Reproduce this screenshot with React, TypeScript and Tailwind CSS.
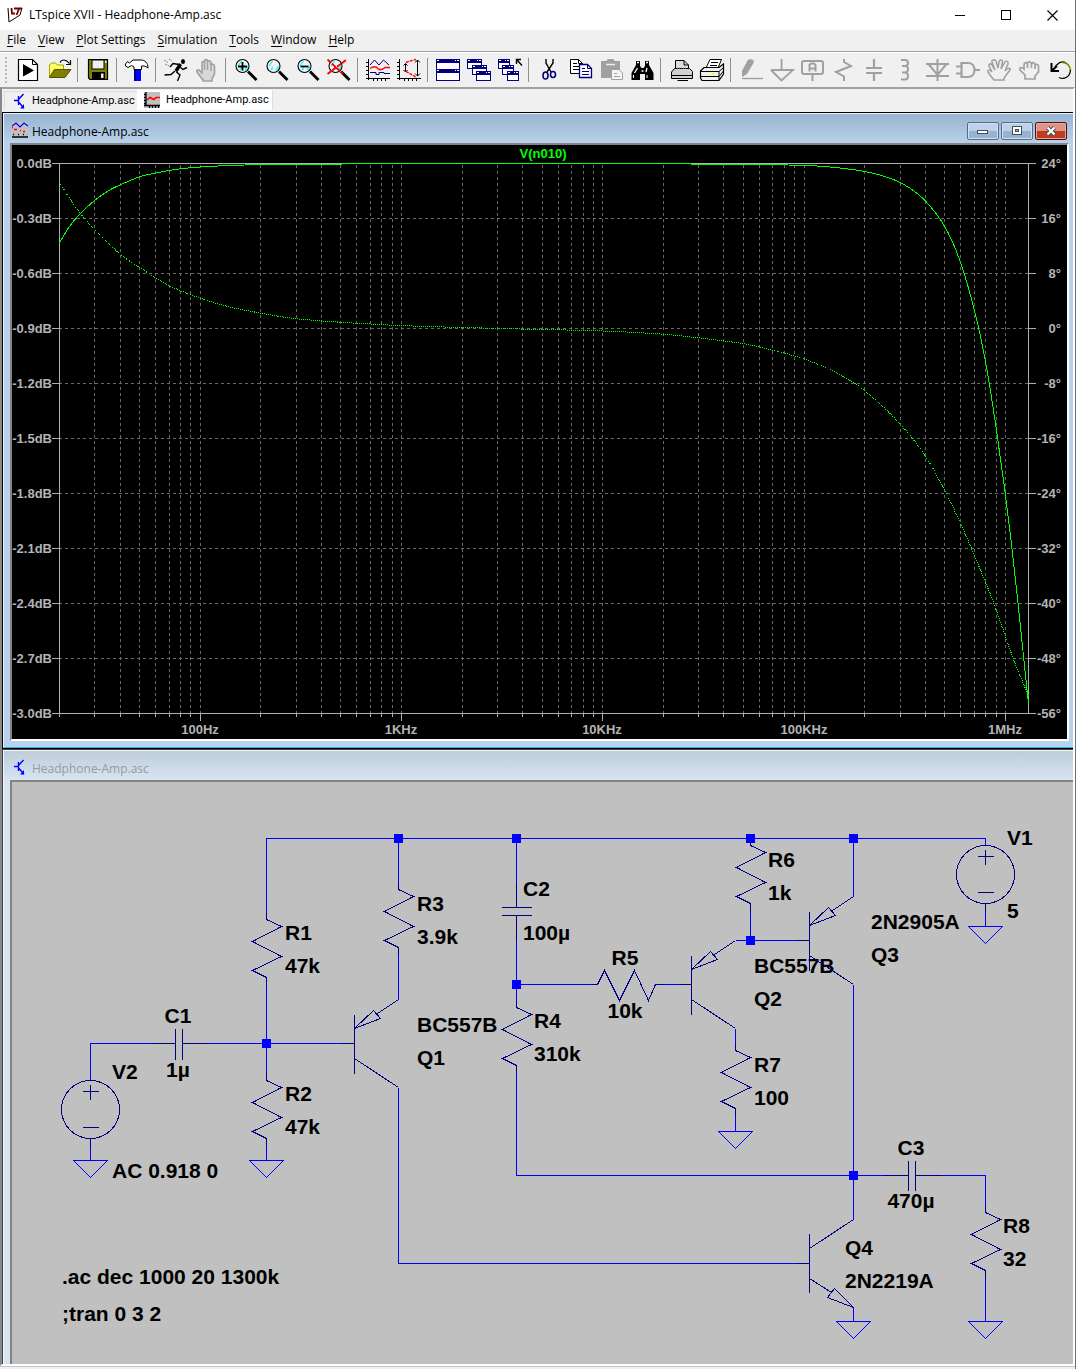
import type { ReactNode } from 'react';

const menus = ['File', 'View', 'Plot Settings', 'Simulation', 'Tools', 'Window', 'Help'];

type Tool = { label: string; art: ReactNode; disabled?: boolean };

const GREY = '#a0a0a0';
const NAVY = '#000080';

const lens = (
  <>
    <path d="M15 13.500L23.500 22" stroke="#000" strokeWidth="2.800" />
    <circle cx="9.500" cy="8" r="6.500" fill="#f4f4f4" stroke="#000" strokeWidth="1.100" />
  </>
);

const shine = <path d="M5 8L8.500 3M7 12L9 9.500M12 12L15 8" stroke="#0ff" strokeWidth="1.300" />;

const miniWindow = (x: number, y: number, w = 14, h = 9) => (
  <g key={`${x}-${y}`}>
    <rect x={x + 0.5} y={y + 0.5} width={w} height={h} fill="#fff" stroke={NAVY} />
    <rect x={x} y={y} width={w + 1} height="4" fill={NAVY} />
    <path d={`M${x + 1} ${y + 1.5}h2M${x + w - 4} ${y + 1.5}h1M${x + w - 2} ${y + 1.5}h2`} stroke="#fff" />
  </g>
);

const toolGroups: Tool[][] = [
  [
    {
      label: 'New Schematic',
      art: (
        <>
          <path d="M3.5 1.500H17.500L22.500 6.500V22.500H3.500Z" fill="#fff" stroke="#000" strokeWidth="1.200" />
          <path d="M17.500 1.500V6.500H22.500" fill="none" stroke="#000" />
          <path d="M8 6L19 12.500L8 18.500Z" fill="#000" />
        </>
      ),
    },
    {
      label: 'Open',
      art: (
        <>
          <path d="M3.500 19V7L5.500 5H9.500L11.500 7H17.500V11.500H8L3.500 19Z" fill="#ffff60" stroke="#a0a000" />
          <path d="M3.500 19.500L9 11.500H25L19 19.500Z" fill="#808000" stroke="#505000" />
          <path d="M14 4.500C15.500 1 20 1 23.500 5.500M24.500 2V6.500H20" fill="none" stroke="#000" strokeWidth="1.200" />
        </>
      ),
    },
  ],
  [
    {
      label: 'Save',
      art: (
        <>
          <path d="M3.500 1.500H22.500V21.500H5L3.500 20Z" fill="#808000" stroke="#000" strokeWidth="1.200" />
          <rect x="7" y="2" width="12" height="9" fill="#efefef" stroke="#000" />
          <rect x="20" y="3" width="1.500" height="2" fill="#efefef" />
          <rect x="7" y="14" width="13" height="7" fill="#000" />
          <rect x="16" y="15.500" width="2.500" height="4.500" fill="#efefef" />
        </>
      ),
    },
  ],
  [
    {
      label: 'Control Panel',
      art: (
        <>
          <rect x="10" y="11" width="7" height="12" fill="#0000ff" />
          <path d="M11 11V23" stroke={NAVY} strokeWidth="2" />
          <path
            d="M1.500 6L3.500 3.500L5.500 5L9 2H17C21 2 24 5 24 10C21 7.500 19 8 17.500 8V11.500H10V9L7.500 7.500L4 9.500L1.500 8Z"
            fill="#fff"
            stroke="#000"
          />
        </>
      ),
    },
  ],
  [
    {
      label: 'Run',
      art: (
        <>
          <ellipse cx="20" cy="3.500" rx="2" ry="2.500" fill="#000" />
          <path d="M17.500 6L13 13" stroke="#000" strokeWidth="3.400" />
          <path
            d="M16 6.500L10 5.500L7 9M17 9L20 11.500L24 9.500M12 13L8 16.500L1.500 17M13 13.500L17 17L14.500 23"
            fill="none"
            stroke="#000"
            strokeWidth="1.400"
          />
          <path d="M1 2L5 4.500M2 6L6 8M6 1L9 3" stroke="#808080" strokeDasharray="2 1" />
        </>
      ),
    },
    {
      label: 'Halt',
      disabled: true,
      art: (
        <>
          <path
            d="M8 21L3 14C2 12 4 11 6 13L8 15V5C8 3 10.500 3 10.500 5V3C10.500 1 13.500 1 13.500 3V4C14 2 17 2.500 17 5V7C17.500 5.500 20.500 6 20.500 8V16L18 21V23H9V21Z"
            fill="#d8d8d8"
            stroke={GREY}
            strokeWidth="1.600"
          />
          <path d="M10.500 4V12M13.500 4V12M17 6V13" stroke={GREY} strokeWidth="1.400" />
        </>
      ),
    },
  ],
  [
    {
      label: 'Zoom In',
      art: (
        <>
          {lens}
          {shine}
          <path d="M9.500 4V12.500M5 8.500H14" stroke="#000" strokeWidth="1.800" />
        </>
      ),
    },
    {
      label: 'Pan',
      art: (
        <>
          {lens}
          {shine}
        </>
      ),
    },
    {
      label: 'Zoom Out',
      art: (
        <>
          {lens}
          {shine}
          <path d="M5.500 8.500H13.500" stroke="#000" strokeWidth="1.800" />
        </>
      ),
    },
    {
      label: 'Zoom Full Extents',
      art: (
        <>
          {lens}
          {shine}
          <path d="M1.500 1.500L17 16M1.500 16L20 2" stroke="#f00" strokeWidth="1.900" strokeDasharray="5 1" />
        </>
      ),
    },
  ],
  [
    {
      label: 'Autorange',
      art: (
        <>
          <path d="M3.500 1V22M1 4.500H4M1 8.500H4M1 12.500H4M1 16.500H4M1 20.500H25M8.500 20V23M12.500 20V23M16.500 20V23M20.500 20V23" stroke="#000" />
          <path d="M5 7L9.500 2L14 7L18.500 2L24 7" fill="none" stroke={NAVY} />
          <path d="M5 10.500L8 9H11L14 11.500H17L20 9.500H25" fill="none" stroke="#f00" strokeWidth="1.300" />
          <path d="M5 14.500H11V16.500H14V14.500H19V15.500H25" fill="none" stroke={NAVY} />
        </>
      ),
    },
    {
      label: 'Setup Axes',
      art: (
        <>
          <path d="M3.500 1V22M1 4.500H4M1 8.500H4M1 12.500H4M1 16.500H4M1 20.500H25M8.500 20V23M12.500 20V23M16.500 20V23M20.500 20V23" stroke="#000" />
          <path d="M9.500 6V13M7.500 7.500L9.500 5.500L11.500 7.500M7.500 12L9.500 14L11.500 12M21.500 2V18M19 4.500L21.500 2L24 4.500M19 15.500L21.500 18L24 15.500" fill="none" stroke="#000" />
          <path d="M10 4.500L14 3L20 1.500M10 13.500L20 19" stroke="#f00" fill="none" strokeWidth="1.400" strokeDasharray="3 1" />
        </>
      ),
    },
  ],
  [
    {
      label: 'Tile Windows',
      art: (
        <>
          {miniWindow(1, 1, 23, 10)}
          {miniWindow(1, 11, 23, 11)}
        </>
      ),
    },
    {
      label: 'Cascade Windows',
      art: (
        <>
          {miniWindow(1, 1)}
          {miniWindow(6, 7)}
          {miniWindow(10, 13)}
        </>
      ),
    },
    {
      label: 'Close All',
      art: (
        <>
          {miniWindow(1, 1, 11)}
          {miniWindow(5, 7, 11)}
          {miniWindow(10, 13, 11)}
          <path d="M19.500 6V1.500H24M20 2L25 7.500" fill="none" stroke="#000" strokeWidth="1.400" />
        </>
      ),
    },
  ],
  [
    {
      label: 'Cut',
      art: (
        <>
          <path d="M10 1V5L15 14M17 1V5L11 14" fill="none" stroke="#000" strokeWidth="1.400" />
          <ellipse cx="9.500" cy="17.500" rx="2.500" ry="3.500" fill="none" stroke={NAVY} strokeWidth="1.600" />
          <ellipse cx="17" cy="16.500" rx="2.500" ry="3" fill="none" stroke={NAVY} strokeWidth="1.600" />
        </>
      ),
    },
    {
      label: 'Copy',
      art: (
        <>
          <path d="M3.500 1.500H11.500L15.500 5.500V15.500H3.500Z" fill="#fff" stroke="#000" />
          <path d="M6 5.500H10M6 8.500H12M6 11.500H12M11.500 1.500V5.500H15.500" fill="none" stroke="#000" />
          <path d="M12.500 6.500H20.500L24.500 10.500V19.500H12.500Z" fill="#fff" stroke={NAVY} strokeWidth="1.300" />
          <path d="M15 10.500H18M15 13.500H22M15 16.500H22M20.500 6.500V10.500H24.500" fill="none" stroke={NAVY} />
        </>
      ),
    },
    {
      label: 'Paste',
      disabled: true,
      art: (
        <>
          <path d="M3 3H8L10 1H15L17 3H22V20H3Z" fill={GREY} />
          <path d="M8 6.500H17" stroke="#f0f0f0" strokeWidth="1.500" />
          <path d="M13.500 11.500H21L24.500 15V21.500H13.500Z" fill="#f4f4f4" stroke={GREY} />
          <path d="M16 15.500H19M16 18.500H22" stroke={GREY} />
        </>
      ),
    },
    {
      label: 'Find',
      art: (
        <>
          <path d="M7 3H11V8L12.500 10H14.500L16 8V3H20V7L24.500 15V22H16V16H11V22H2.500V15L7 7Z" fill="#000" />
          <path d="M8 4.500H10M17 4.500H19M8.500 10L5.500 15M18 10L17 14M12.500 13H14.500" stroke="#fff" strokeWidth="1.300" />
          <path d="M4.500 17V20M18 17V20" stroke="#fff" />
        </>
      ),
    },
  ],
  [
    {
      label: 'Print',
      art: (
        <>
          <path d="M7.500 11V2.500H16L20.500 7V11" fill="#ddd" stroke="#000" />
          <path d="M16 2.500V7H20.500" fill="none" stroke="#000" />
          <path d="M3.500 14L6.500 10.500H21.500L24.500 13.500V20.500H3.500Z" fill="#d0d0d0" stroke="#000" />
          <path d="M4 17.500H24M9.500 22.500H20" stroke="#000" />
          <path d="M9 10H19" stroke="#999" strokeDasharray="1 1" />
        </>
      ),
    },
    {
      label: 'Print Setup',
      art: (
        <>
          <path d="M7 10L11 1.500H22.500L19 10" fill="#fff" stroke="#000" />
          <path d="M12 4.500H19M11 7.500H18" stroke="#000" />
          <path d="M1.500 13L5 9.500H20L24.500 6V16L20 22.500H3L1.500 20Z" fill="#f0f0f0" stroke="#000" strokeWidth="1.200" />
          <path d="M1.500 13.500H20L24.500 9.500M20 13.500V22M1.500 18.500H20L24.500 13" fill="none" stroke="#000" />
          <path d="M12 16H16" stroke="#ff0" strokeWidth="1.500" />
        </>
      ),
    },
  ],
  [
    {
      label: 'Wire',
      disabled: true,
      art: (
        <>
          <path d="M4 19V13L9.500 2.500C11.500 0.500 17 1 15.500 5L9 16Z" fill={GREY} />
          <path d="M4 20.500H25" stroke={GREY} strokeWidth="1.400" />
        </>
      ),
    },
    {
      label: 'Ground',
      disabled: true,
      art: <path d="M12.500 1V12M2 12H24L12.500 22.500L2 12" fill="none" stroke={GREY} strokeWidth="1.800" />,
    },
    {
      label: 'Label Net',
      disabled: true,
      art: (
        <>
          <rect x="2" y="3" width="21" height="13" rx="2" fill="none" stroke={GREY} strokeWidth="2" />
          <path d="M12.500 16V23M9.500 13.500V7L11 5.500H14L15.500 7V13.500M9.500 10.500H15.500" fill="none" stroke={GREY} strokeWidth="2" />
        </>
      ),
    },
    {
      label: 'Resistor',
      disabled: true,
      art: <path d="M13 1V4L20 8L5 14L13 18.500V23" fill="none" stroke={GREY} strokeWidth="2" />,
    },
    {
      label: 'Capacitor',
      disabled: true,
      art: <path d="M12 1V10M12 15V23M4 10H20M4 15H20" fill="none" stroke={GREY} strokeWidth="2.200" />,
    },
    {
      label: 'Inductor',
      disabled: true,
      art: (
        <path
          d="M8 2H12C16 2 16 8 12 8H9M12 8C16 8 16 14.500 12 14.500H9M12 14.500C16 14.500 16 21.500 12 21.500H8"
          fill="none"
          stroke={GREY}
          strokeWidth="2"
        />
      ),
    },
    {
      label: 'Diode',
      disabled: true,
      art: <path d="M13.500 1V23M2 6H25M2 18H25M4.500 6L13.500 17L22.500 6" fill="none" stroke={GREY} strokeWidth="2" />,
    },
    {
      label: 'Component',
      disabled: true,
      art: (
        <path d="M6.500 5H13C17 5 19.500 8 19.500 12C19.500 16 17 19 13 19H6.500ZM1 8.500H6M1 15.500H6M19.500 12H25" fill="none" stroke={GREY} strokeWidth="2.200" />
      ),
    },
    {
      label: 'Move',
      disabled: true,
      art: (
        <path
          d="M8 22L4 17L2 14C1 12 4 11 6 14L3 8C2 6 5 5 6 7L9 12L6 4C5 2 9 1 10 3L12 10L13 4C14 1 17 2 16.500 4L15 11L19 4C20 2 23 4 22 6L19 13C22 9 25 10 24 12L18 20V22Z"
          fill="none"
          stroke={GREY}
          strokeWidth="1.500"
        />
      ),
    },
    {
      label: 'Drag',
      disabled: true,
      art: (
        <path
          d="M8 21V17L3 12C2 9 5 9 7 11V7C7 4 10 4 10.500 6C10.500 3 14 3 14.500 6C15 4 18 4 18 7C19 6 22 6 21.500 9V14L18 18V21ZM10.500 6V10M14.500 6V10M18 7V11"
          fill="none"
          stroke={GREY}
          strokeWidth="1.700"
        />
      ),
    },
    {
      label: 'Undo',
      art: (
        <>
          <path d="M6 11C9 5 14 2 18 5" fill="none" stroke="#000" strokeWidth="1.200" />
          <path d="M14 4.500C19 4 22.500 8 22.500 13" fill="none" stroke="#808000" strokeWidth="1.600" />
          <path d="M22.500 12C22 19 16 22 11 19.500" fill="none" stroke="#000" strokeWidth="1.200" />
          <path d="M3.500 5V13H11M4 12.500L9 8" fill="none" stroke="#000" strokeWidth="2" />
        </>
      ),
    },
  ],
];

function ToolbarIcon({ children }: { children: ReactNode }) {
  return (
    <svg viewBox="0 0 24 24" className="h-6 w-6 shrink-0 overflow-visible" aria-hidden="true">
      {children}
    </svg>
  );
}

function TransistorIcon() {
  return (
    <svg viewBox="0 0 16 16" className="h-4 w-4 shrink-0" aria-hidden="true">
      <path d="M2 7.500H7M6.500 3V12M7 6L11.500 1M7 9.500L12 15" stroke="#00f" strokeWidth="1.400" fill="none" />
      <path d="M12 11V15.500H8Z" fill="#00f" />
    </svg>
  );
}

function TraceIcon() {
  return (
    <svg viewBox="0 0 16 16" className="h-4 w-4 shrink-0" aria-hidden="true">
      <rect width="16" height="16" fill="#c0c0c0" />
      <path d="M2 0V14M0 2.500H2M0 5.500H2M0 8.500H2M0 11.500H2M0 13.500H16M5.500 13V16M8.500 13V16M11.500 13V16M14.500 13V16" stroke="#000" strokeWidth="1.300" />
      <path d="M3 8L6 5.500L10 7.500L12 5.500H16" fill="none" stroke="#f00" strokeWidth="1.600" />
    </svg>
  );
}

function WaveformIcon() {
  return (
    <svg viewBox="0 0 16 16" className="h-4 w-4 shrink-0" aria-hidden="true">
      <rect width="16" height="16" fill="#c0c0c0" />
      <path d="M0 4L4 1L8 5L12 1L16 4" fill="none" stroke="#00f" strokeWidth="1.200" />
      <path d="M2 7.500H5M8 8.500H9M11 9.500H13M0 5.500H1" stroke="#f00" strokeWidth="1.500" />
      <path d="M0 15H16M1 12.500H2M6 12.500H7M11 12.500H12" stroke="#000" strokeWidth="1.600" />
    </svg>
  );
}

// ---------- waveform pane ----------

const PLOT = { left: 59, right: 1028, top: 163, bottom: 713, decade: 201.3 };

const freqX = (hz: number) => Math.floor(PLOT.left + 0.5 + Math.log10(hz / 20) * PLOT.decade) + 0.5;

const gridFreqs: number[] = [];
for (let dec = 10; dec <= 1e6; dec *= 10) {
  for (let m = 1; m < 10; m++) {
    const f = dec * m;
    if (f > 20 && f < 1.3e6) gridFreqs.push(f);
  }
}

const majors = [
  { hz: 100, label: '100Hz' },
  { hz: 1e3, label: '1KHz' },
  { hz: 1e4, label: '10KHz' },
  { hz: 1e5, label: '100KHz' },
  { hz: 1e6, label: '1MHz' },
];

const levels = Array.from({ length: 11 }, (_, i) => ({
  y: PLOT.top + 0.5 + i * 55,
  db: `${i === 0 ? '' : '-'}${(i * 0.3).toFixed(1)}dB`,
  deg: `${24 - i * 8}°`,
}));

const magnitude: [number, number][] = [
  [59.5, 243], [69, 227], [80, 214], [94, 201], [108, 191], [120, 185], [139, 177], [156, 173], [175, 169.5], [200, 167],
  [230, 165.500], [260, 164.500], [341, 164.4], [342, 163.5], [691, 163.5], [692, 164.4], [770, 164.6], [811, 165.500],
  [840, 168], [865, 171.500], [885, 176.5], [903, 184], [918, 194], [930, 206], [942, 222], [953, 243], [963, 270], [972, 301],
  [980, 334], [988, 376], [996, 427], [1004, 484], [1011, 540], [1018, 603], [1024, 661], [1028.500, 704],
];

const phase: [number, number][] = [
  [59.500, 182], [68, 196], [80, 213], [94, 229], [120, 254], [139, 267], [168, 285], [200, 298], [230, 307], [260, 313],
  [290, 318], [330, 321.500], [400, 325.5], [500, 328.5], [602, 331], [660, 334], [700, 338], [745, 344], [780, 352],
  [804, 359], [835, 372], [865, 391], [900, 424], [926, 457], [948, 497], [967, 538], [980, 569], [992.500, 600],
  [1005, 635], [1013, 658], [1028.500, 696],
];

function toSpline(pts: [number, number][]) {
  let d = `M${pts[0][0]} ${pts[0][1]}`;
  for (let i = 0; i < pts.length - 1; i++) {
    const p0 = pts[Math.max(i - 1, 0)];
    const p1 = pts[i];
    const p2 = pts[i + 1];
    const p3 = pts[Math.min(i + 2, pts.length - 1)];
    // limit the handles to a third of the span so uneven spacing does not overshoot
    const span = p2[0] - p1[0];
    const s1 = (p2[1] - p0[1]) / (p2[0] - p0[0]);
    const s2 = (p3[1] - p1[1]) / (p3[0] - p1[0]);
    d += `C${p1[0] + span / 3} ${p1[1] + (s1 * span) / 3} ${p2[0] - span / 3} ${p2[1] - (s2 * span) / 3} ${p2[0]} ${p2[1]}`;
  }
  return d;
}

const toLine = (pts: [number, number][]) => 'M' + pts.map((p) => p.join(' ')).join('L');

function WaveformPlot() {
  return (
    <svg
      viewBox="12 145 1055 594"
      className="block h-auto w-full bg-black font-['Liberation_Sans',Arial,sans-serif] text-[13px] font-bold"
      role="img"
      aria-label="Frequency response of V(n010)"
    >
      <g stroke="#6a6a6a" strokeDasharray="3 3" shapeRendering="crispEdges">
        {gridFreqs.map((f) => (
          <path key={f} d={`M${freqX(f)} 165V713`} />
        ))}
        {levels.slice(1, -1).map((l) => (
          <path key={l.y} d={`M59 ${l.y}H1028`} />
        ))}
      </g>
      <g stroke="#b0b0b0" fill="none" shapeRendering="crispEdges">
        <path d="M53 163.5H1036M53 713.5H1036M59.500 163V717M1028.500 163V713" />
        {gridFreqs.map((f) => (
          <path key={f} d={`M${freqX(f)} 713V${majors.some((m) => m.hz === f) ? 721 : 717}`} />
        ))}
        {levels.map((l) => (
          <path key={l.y} d={`M52 ${l.y}H59M1029 ${l.y}H1036`} />
        ))}
      </g>
      <g stroke="#00ff00" fill="none" shapeRendering="crispEdges">
        <path d={toLine(magnitude.slice(11, 18))} />
        <path d={toSpline(magnitude.slice(0, 12))} />
        <path d={toSpline(magnitude.slice(17))} />
        <path d={toSpline(phase)} strokeDasharray="1 1" />
      </g>
      <g fill="#b4b4b4">
        {levels.map((l) => (
          <g key={l.y}>
            <text x="52" y={l.y + 4.5} textAnchor="end">{l.db}</text>
            <text x="1061" y={l.y + 4.5} textAnchor="end">{l.deg}</text>
          </g>
        ))}
        {majors.map((m) => (
          <text key={m.hz} x={freqX(m.hz) - 0.5} y="734" textAnchor="middle">{m.label}</text>
        ))}
      </g>
      <text x="543" y="158" textAnchor="middle" fill="#00ff00">V(n010)</text>
    </svg>
  );
}

// ---------- schematic pane ----------

type Pt = { x: number; y: number };

const resistors: Pt[] = [
  { x: 266, y: 919 },
  { x: 398, y: 889 },
  { x: 266, y: 1080 },
  { x: 516, y: 1007 },
  { x: 750, y: 845 },
  { x: 735, y: 1050 },
  { x: 985, y: 1212 },
];

const grounds: Pt[] = [
  { x: 90, y: 1160 },
  { x: 266, y: 1160 },
  { x: 735, y: 1131 },
  { x: 985, y: 926 },
  { x: 853, y: 1321 },
  { x: 985, y: 1321 },
];

const junctions: Pt[] = [
  { x: 398, y: 838 },
  { x: 516, y: 838 },
  { x: 750, y: 838 },
  { x: 853, y: 838 },
  { x: 516, y: 984 },
  { x: 750, y: 940 },
  { x: 266, y: 1043 },
  { x: 853, y: 1175 },
];

const pnps: Pt[] = [
  { x: 354, y: 1043 },
  { x: 691, y: 984 },
  { x: 809, y: 940 },
];

const sources: Pt[] = [
  { x: 985, y: 874 },
  { x: 90, y: 1109 },
];

const wires = [
  'M266 919V838H985V845',
  'M398 838V889M398 947V999M398 1087V1263H809',
  'M516 838V907M516 915V1007M516 1065V1175H908',
  'M516 984H597M655 984H691',
  'M750 838V845M750 903V940M735 940H809',
  'M735 1028V1050M735 1108V1131',
  'M853 838V896M853 984V1219M853 1307V1321',
  'M915 1175H985V1212M985 1270V1321M985 903V926',
  'M90 1080V1043H175M182 1043H354M90 1138V1160',
  'M266 977V1080M266 1138V1160',
];

const labels: [number, number, string, boolean?][] = [
  [285, 940, 'R1'], [285, 973, '47k'],
  [417, 911, 'R3'], [417, 944, '3.9k'],
  [523, 896, 'C2'], [523, 940, '100µ'],
  [417, 1032, 'BC557B'], [417, 1065, 'Q1'],
  [534, 1028, 'R4'], [534, 1061, '310k'],
  [625, 965, 'R5', true], [625, 1018, '10k', true],
  [768, 867, 'R6'], [768, 900, '1k'],
  [754, 973, 'BC557B'], [754, 1006, 'Q2'],
  [754, 1072, 'R7'], [754, 1105, '100'],
  [871, 929, '2N2905A'], [871, 962, 'Q3'],
  [1007, 845, 'V1'], [1007, 918, '5'],
  [911, 1155, 'C3', true], [911, 1208, '470µ', true],
  [1003, 1233, 'R8'], [1003, 1266, '32'],
  [845, 1255, 'Q4'], [845, 1288, '2N2219A'],
  [178, 1023, 'C1', true], [178, 1077, '1µ', true],
  [112, 1079, 'V2'], [112, 1178, 'AC 0.918 0'],
  [285, 1101, 'R2'], [285, 1134, '47k'],
  [62, 1284, '.ac dec 1000 20 1300k'], [62, 1321, ';tran 0 3 2'],
];

function Schematic() {
  return (
    <svg
      viewBox="12 782 1061 582"
      className="block h-auto w-full bg-[#c0c0c0] font-['Liberation_Sans',Arial,sans-serif] text-[21px] font-bold"
      role="img"
      aria-label="Headphone amplifier schematic"
    >
      {labels.map(([x, y, s, centered]) => (
        <text key={`${x}-${y}`} x={x} y={y} textAnchor={centered ? 'middle' : 'start'}>{s}</text>
      ))}

      <g transform="translate(0.5 0.5)" fill="none" shapeRendering="crispEdges">
        <g stroke="#0000ff">
          {wires.map((d) => (
            <path key={d} d={d} />
          ))}
          {grounds.map(({ x, y }) => (
            <path key={`${x}-${y}`} d={`M${x - 17} ${y}h34l-17 17z`} />
          ))}
        </g>

        <g stroke={NAVY}>
          {resistors.map(({ x, y }) => (
            <path key={`${x}-${y}`} d={`M${x} ${y - 7}v7l15 7l-29 15l29 15l-29 14l14 7v7`} />
          ))}
          <path d="M590 984h7l7 -14l15 30l15 -30l14 30l7 -16h7" />

          {/* capacitors */}
          <path d="M501 907h30M501 915h30M516 883V907M516 915V940" />
          <path d="M175 1028v31M182 1028v31M150 1043H175M182 1043H208" />
          <path d="M908 1160v30M915 1160v30M883 1175H908M915 1175H941" />

          {pnps.map(({ x, y }) => (
            <path
              key={`${x}-${y}`}
              d={`M${x} ${y - 29}v59M${x - 13} ${y}h13M${x} ${y - 15}l19 -18l7 8zM${x + 23} ${y - 30}l21 -14M${x} ${y + 15}l44 29`}
            />
          ))}
          {/* Q4 */}
          <path d="M809 1233v59M796 1263h13M809 1248L853 1219M809 1278L831 1292M853 1307L834 1288L827 1297Z" />

          {sources.map(({ x, y }) => (
            <g key={x}>
              <circle cx={x} cy={y} r="29" />
              <path d={`M${x - 8} ${y - 18}h16M${x} ${y - 25}v15M${x - 8} ${y + 18}h16M${x} ${y + 29}v8`} />
            </g>
          ))}
        </g>
      </g>

      <g fill="#0000ff">
        {junctions.map(({ x, y }) => (
          <rect key={`${x}-${y}`} x={x - 4} y={y - 4} width="9" height="9" />
        ))}
      </g>
    </svg>
  );
}

export default function App() {
  return (
    <div className="flex flex-col border-r border-[#707070] bg-[#f0f0f0] font-['Open_Sans','Noto_Sans',sans-serif] text-xs text-black">
      {/* Title bar */}
      <header className="flex h-[30px] items-center bg-white pl-[7px]">
        <svg viewBox="0 0 16 16" className="h-4 w-4 shrink-0" aria-hidden="true">
          <path d="M1 1L2 15L13 8L15 1" fill="#fff" stroke="#000" />
          <path d="M4.500 1L5 6.500H8M7 1.500H15M12 2L9.500 8" fill="none" stroke="#700000" strokeWidth="1.800" />
        </svg>
        <h1 className="ml-1.5 flex-1">LTspice XVII - Headphone-Amp.asc</h1>
        <button aria-label="Minimize" className="flex h-full w-[46px] items-center justify-center">
          <svg viewBox="0 0 11 11" className="h-[11px] w-[11px]"><path d="M0 5.500H10" stroke="#000" /></svg>
        </button>
        <button aria-label="Maximize" className="flex h-full w-[46px] items-center justify-center">
          <svg viewBox="0 0 11 11" className="h-[11px] w-[11px]"><rect x="0.500" y="0.500" width="9" height="9" fill="none" stroke="#000" /></svg>
        </button>
        <button aria-label="Close" className="flex h-full w-[46px] items-center justify-center">
          <svg viewBox="0 0 11 11" className="h-[11px] w-[11px]"><path d="M0.500 0.500L10.500 10.500M10.500 0.500L0.500 10.500" stroke="#000" strokeWidth="1.200" /></svg>
        </button>
      </header>

      {/* Menu */}
      <nav className="flex h-[22px] gap-3 border-b border-[#a0a0a0] pl-[7px] leading-5">
        {menus.map((m) => (
          <button key={m} className="h-5">
            <span className="underline underline-offset-2">{m[0]}</span>
            {m.slice(1)}
          </button>
        ))}
      </nav>

      {/* Toolbar */}
      <div role="toolbar" aria-label="Main" className="flex h-[35px] items-center overflow-hidden border-t border-white">
        <div className="ml-[5px] mr-[5px] h-[26px] w-0 shrink-0 border-l-2 border-dotted border-[#b8b8b8]" />
        {toolGroups.map((group, i) => (
          <div key={i} className="flex shrink-0 items-center">
            {i > 0 && <div className="ml-[3px] mr-1 h-6 w-px bg-[#909090]" />}
            {group.map((t) => (
              <button key={t.label} title={t.label} aria-label={t.label} disabled={t.disabled} className="flex h-[30px] w-[31px] items-center pl-[3px]">
                <ToolbarIcon>{t.art}</ToolbarIcon>
              </button>
            ))}
          </div>
        ))}
      </div>

      <main className="border-2 border-t-[#a0a0a0] border-r-white border-b-white border-l-[#888]">
        {/* Document tabs */}
        <div role="tablist" className="flex h-[23px] items-start bg-[#f0f0f0] pl-0.5 pt-px font-[Roboto,'Open_Sans',sans-serif] text-[11px] whitespace-nowrap">
          <button role="tab" aria-selected="false" className="mt-px flex h-[19px] w-[133px] items-center gap-1 border-l border-t border-[#dcdcdc] pl-[7px]">
            <TransistorIcon />
            <span>Headphone-Amp.asc</span>
          </button>
          <button role="tab" aria-selected="true" className="flex h-5 w-[136px] items-center gap-1.5 border-r border-[#dcdcdc] bg-white pl-[7px]">
            <TraceIcon />
            <span>Headphone-Amp.asc</span>
          </button>
        </div>

        {/* Waveform window */}
        <section className="border-b border-l border-t border-black">
          <div className="border-b border-l border-t border-b-[#2cb8d8] border-l-[#e4f4fc] border-t-[#e4f4fc] bg-[#b9d1ea]">
            <div className="flex h-[29px] bg-linear-to-b from-[#99b4d1] to-[#b9d1ea] pl-2 pr-1.5 pt-2">
              <WaveformIcon />
              <h2 className="ml-1 flex-1 leading-5">Headphone-Amp.asc</h2>
              <div className="flex gap-0.5">
                <button aria-label="Minimize plot" className="flex h-[18px] w-8 items-center justify-center rounded-xs border border-[#566b85] bg-linear-to-b from-[#bdd2ea] from-50% to-[#98b2d0] to-50% inset-ring inset-ring-[#d0e2f2]">
                  <svg viewBox="0 0 12 8" className="h-2 w-3"><rect x="0.500" y="3.500" width="10" height="3" fill="#fff" stroke="#444c5c" /></svg>
                </button>
                <button aria-label="Maximize plot" className="flex h-[18px] w-8 items-center justify-center rounded-xs border border-[#566b85] bg-linear-to-b from-[#bdd2ea] from-50% to-[#98b2d0] to-50% inset-ring inset-ring-[#d0e2f2]">
                  <svg viewBox="0 0 12 10" className="h-2.5 w-3">
                    <rect x="1.500" y="0.500" width="9" height="8" fill="#fff" stroke="#444c5c" />
                    <rect x="4.500" y="3.500" width="3" height="2" fill="#98b2d0" stroke="#444c5c" />
                  </svg>
                </button>
                <button aria-label="Close plot" className="flex h-[18px] w-8 items-center justify-center rounded-xs border border-[#4c1018] bg-linear-to-b from-[#dc9484] from-50% to-[#bc3c24] to-50% inset-ring inset-ring-[#e8a89c]">
                  <svg viewBox="0 0 12 10" className="h-2.5 w-3">
                    <path d="M2.500 1.500L9.500 8.500M9.500 1.500L2.500 8.500" stroke="#444c5c" strokeWidth="4" />
                    <path d="M2.500 1.500L9.500 8.500M9.500 1.500L2.500 8.500" stroke="#fff" strokeWidth="2.200" />
                  </svg>
                </button>
              </div>
            </div>
            <div className="pb-1.5 pl-1.5 pr-1">
              <div className="border-2 border-b-white border-l-[#848484] border-r-white border-t-[#848484]">
                <WaveformPlot />
              </div>
            </div>
          </div>
        </section>

        {/* Schematic window */}
        <section className="border-l border-t border-[#404040]">
          <div className="border-l border-t border-[#f0f8fc] bg-[#d7e4f2]">
            <div className="flex h-[29px] bg-linear-to-b from-[#bfcddb] to-[#d7e4f2] pl-2 pt-2">
              <TransistorIcon />
              <h2 className="ml-1 leading-5 text-[#9a9a9a]">Headphone-Amp.asc</h2>
            </div>
            <div className="pl-1.5">
              <div className="border-l-2 border-t-2 border-[#848484]">
                <Schematic />
              </div>
            </div>
          </div>
        </section>
      </main>
      <footer className="h-[3px] border-t border-[#c8c8c8]" />
    </div>
  );
}
